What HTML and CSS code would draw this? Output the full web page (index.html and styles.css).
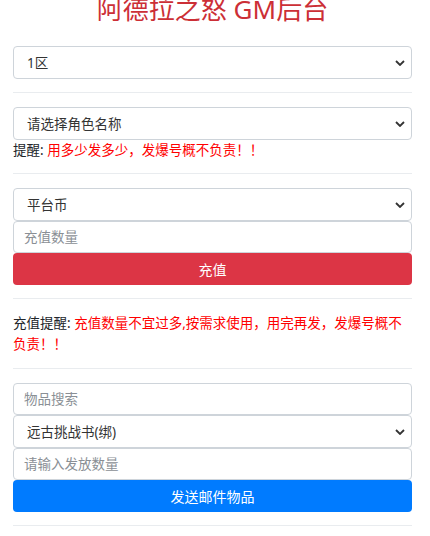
FILE: index.html
```html
<!DOCTYPE html>
<html lang="zh-CN">
  <head>
    <meta charset="UTF-8" />
    <meta name="viewport" content="width=device-width, initial-scale=1.0" />
    <title>阿德拉之怒 GM后台</title>
    <link rel="stylesheet" href="styles.css">
  </head>
  <body>
    <div class="container">
      <h1 class="title">阿德拉之怒 GM后台</h1>

      <select class="form-control">
        <option>1区</option>
      </select>
      <hr />

      <select class="form-control">
        <option>请选择角色名称</option>
      </select>
      <p class="tip tip-short">提醒: <span class="warn">用多少发多少，发爆号概不负责！！</span></p>
      <hr />

      <select class="form-control">
        <option>平台币</option>
      </select>
      <input type="number" class="form-control" placeholder="充值数量" />
      <button class="btn btn-danger">充值</button>
      <hr />

      <p class="tip">充值提醒: <span class="warn">充值数量不宜过多,按需求使用，用完再发，发爆号概不负责！！</span></p>
      <hr />

      <input type="text" class="form-control" placeholder="物品搜索" />
      <select class="form-control">
        <option>远古挑战书(绑)</option>
      </select>
      <input type="number" class="form-control" placeholder="请输入发放数量" />
      <button class="btn btn-primary">发送邮件物品</button>
      <hr />
    </div>
  </body>
</html>
```

FILE: styles.css
```css
* {
  box-sizing: border-box;
}

body {
  margin: 0;
  background: #fff;
  color: #212529;
  font-family: "Noto Sans", "Noto Sans CJK SC", sans-serif;
  font-size: 13.5px;
}

.container {
  width: 399px;
  margin-left: 13px;
}

.title {
  margin: -4px 0 24px;
  font-size: 26px;
  line-height: 26px;
  font-weight: normal;
  text-align: center;
  color: #cc2f36;
}

.form-control {
  display: block;
  width: 100%;
  height: 33px;
  padding: 0 10px;
  font-family: inherit;
  font-size: 13.5px;
  color: #495057;
  background-color: #fff;
  border: 1px solid #ced4da;
  border-radius: 4px;
  outline: none;
}

input.form-control {
  height: 32px;
}

.form-control::placeholder {
  color: #8a8f95;
}

select.form-control {
  appearance: none;
  -webkit-appearance: none;
  padding-left: 13px;
  background-image: url("data:image/svg+xml,%3Csvg xmlns='http://www.w3.org/2000/svg' width='10' height='6' viewBox='0 0 10 6'%3E%3Cpath d='M1 1l4 4 4-4' fill='none' stroke='%23333' stroke-width='1.8'/%3E%3C/svg%3E");
  background-repeat: no-repeat;
  background-position: right 6px center;
  color: #333;
}

.btn {
  display: block;
  width: 100%;
  height: 32px;
  border: none;
  border-radius: 4px;
  color: #fff;
  font-family: inherit;
  font-size: 14px;
  cursor: pointer;
}

.btn-danger {
  background-color: #dc3545;
}

.btn-primary {
  background-color: #007bff;
}

hr {
  margin: 13px 0 14px;
  border: none;
  border-top: 1px solid #e9ecef;
}

.tip {
  margin: 0;
  height: 42px;
  line-height: 21px;
  color: #212529;
}

.tip-short {
  height: 20px;
  line-height: 20px;
}

.warn {
  color: #f00;
}
```
